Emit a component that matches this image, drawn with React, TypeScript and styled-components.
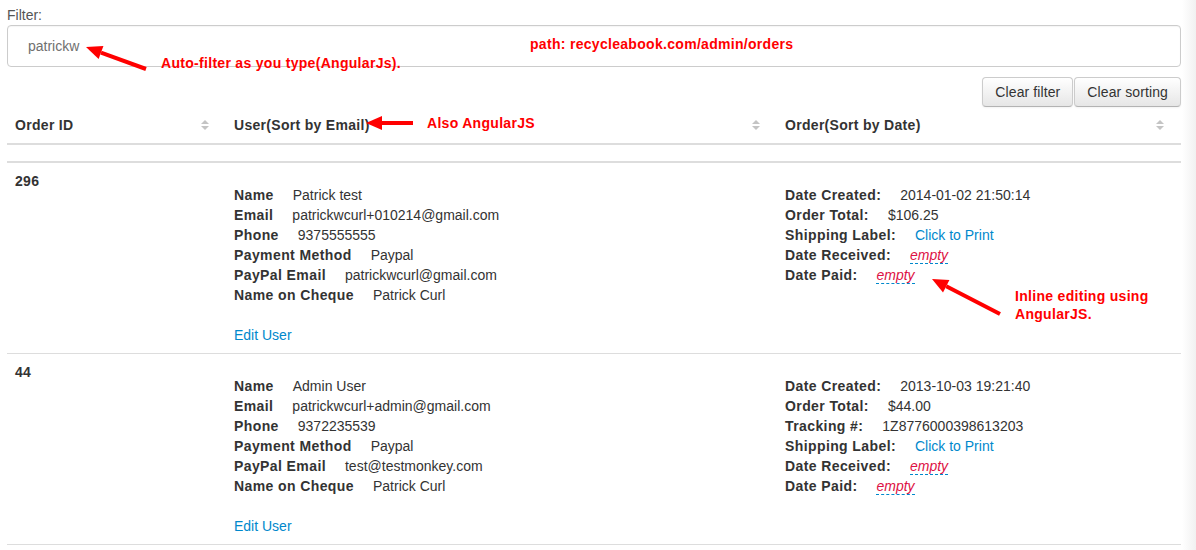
import React from "react";
import styled, { createGlobalStyle } from "styled-components";

const Global = createGlobalStyle`
  html, body {
    margin: 0;
    padding: 0;
    background: linear-gradient(to right, #ffffff 0, #ffffff 1182px, #f1f1f1 1196px);
    font-family: "Liberation Sans", Arial, Helvetica, sans-serif;
    font-size: 14px;
    line-height: 20px;
    color: #333;
  }
`;

const Page = styled.div`
  position: relative;
  width: 1174px;
  padding: 5px 15px 0 7px;
`;

const FilterLabel = styled.label`
  display: block;
  color: #555;
  font-size: 14px;
  line-height: 20px;
`;

const FilterInput = styled.div`
  box-sizing: border-box;
  height: 42px;
  border: 1px solid #ccc;
  border-radius: 4px;
  padding: 10px 20px;
  color: #707070;
  font-size: 14px;
  line-height: 20px;
  box-shadow: inset 0 1px 1px rgba(0, 0, 0, 0.04);
`;

const ButtonBar = styled.div`
  display: flex;
  justify-content: flex-end;
  margin-top: 10px;
`;

const Button = styled.button`
  box-sizing: border-box;
  height: 30px;
  padding: 4px 12px;
  font-family: inherit;
  font-size: 14px;
  line-height: 20px;
  color: #333;
  background: linear-gradient(to bottom, #ffffff, #e6e6e6);
  border: 1px solid #ccc;
  border-bottom-color: #b3b3b3;
  border-radius: 4px;
  box-shadow: inset 0 1px 0 rgba(255, 255, 255, 0.2), 0 1px 2px rgba(0, 0, 0, 0.05);
  margin-left: 1px;
  letter-spacing: 0.1px;
`;

const Table = styled.table`
  width: 1174px;
  border-collapse: collapse;
  border-spacing: 0;
  table-layout: fixed;
`;

const Th = styled.th<{ $w: number }>`
  box-sizing: border-box;
  width: ${(p) => p.$w}px;
  padding: 8px;
  text-align: left;
  font-weight: bold;
  letter-spacing: 0.3px;
  vertical-align: bottom;
  border-bottom: 2px solid #ddd;
`;

const ThInner = styled.div`
  display: flex;
  align-items: center;
  justify-content: space-between;
  padding-right: 9px;
`;

const SortIcon = styled.span`
  display: inline-flex;
  flex-direction: column;
  align-items: center;
  gap: 2px;
  &::before,
  &::after {
    content: "";
    width: 0;
    height: 0;
    border-left: 4px solid transparent;
    border-right: 4px solid transparent;
  }
  &::before {
    border-bottom: 4px solid #c4c4c4;
  }
  &::after {
    border-top: 4px solid #c4c4c4;
  }
`;

const SpacerRow = styled.tr`
  td {
    height: 0;
    padding: 8px;
    border-bottom: 2px solid #ddd;
  }
`;

const Row = styled.tr`
  border-bottom: 1px solid #ddd;
`;

const Td = styled.td`
  box-sizing: border-box;
  padding: 8px;
  vertical-align: top;
`;

const OrderId = styled.div`
  font-weight: bold;
  letter-spacing: 0.3px;
`;

const Details = styled.div`
  margin-top: 14px;
`;

const Line = styled.div`
  display: flex;
  line-height: 20px;
  white-space: nowrap;
`;

const Label = styled.span`
  font-weight: bold;
  letter-spacing: 0.4px;
  margin-right: 19px;
`;

const Link = styled.a`
  color: #0088cc;
  text-decoration: none;
`;

const Empty = styled.span`
  color: #dd1144;
  font-style: italic;
  border-bottom: 1px dashed #0088cc;
  line-height: 18px;
`;

const Blank = styled.div`
  height: 20px;
`;

const Note = styled.div<{ $x: number; $y: number }>`
  position: absolute;
  left: ${(p) => p.$x}px;
  top: ${(p) => p.$y}px;
  color: #ff0000;
  font-weight: bold;
  font-size: 14px;
  line-height: 18px;
  letter-spacing: 0.3px;
  white-space: nowrap;
`;

const Overlay = styled.svg`
  position: absolute;
  left: 0;
  top: 0;
  width: 1196px;
  height: 550px;
  pointer-events: none;
`;

type Field = [string, React.ReactNode];

const Arrow = ({ x1, y1, x2, y2 }: { x1: number; y1: number; x2: number; y2: number }) => {
  const ang = Math.atan2(y2 - y1, x2 - x1);
  const len = 16;
  const wid = 7;
  const bx = x2 - Math.cos(ang) * len;
  const by = y2 - Math.sin(ang) * len;
  const px = -Math.sin(ang) * wid;
  const py = Math.cos(ang) * wid;
  return (
    <g>
      <line x1={x1} y1={y1} x2={bx} y2={by} stroke="#ff0000" strokeWidth={4} />
      <polygon
        points={`${x2},${y2} ${bx + px},${by + py} ${bx - px},${by - py}`}
        fill="#ff0000"
      />
    </g>
  );
};

const orders: { id: string; user: Field[]; order: Field[] }[] = [
  {
    id: "296",
    user: [
      ["Name", "Patrick test"],
      ["Email", "patrickwcurl+010214@gmail.com"],
      ["Phone", "9375555555"],
      ["Payment Method", "Paypal"],
      ["PayPal Email", "patrickwcurl@gmail.com"],
      ["Name on Cheque", "Patrick Curl"],
    ],
    order: [
      ["Date Created:", "2014-01-02 21:50:14"],
      ["Order Total:", "$106.25"],
      ["Shipping Label:", <Link href="#">Click to Print</Link>],
      ["Date Received:", <Empty>empty</Empty>],
      ["Date Paid:", <Empty>empty</Empty>],
    ],
  },
  {
    id: "44",
    user: [
      ["Name", "Admin User"],
      ["Email", "patrickwcurl+admin@gmail.com"],
      ["Phone", "9372235539"],
      ["Payment Method", "Paypal"],
      ["PayPal Email", "test@testmonkey.com"],
      ["Name on Cheque", "Patrick Curl"],
    ],
    order: [
      ["Date Created:", "2013-10-03 19:21:40"],
      ["Order Total:", "$44.00"],
      ["Tracking #:", "1Z8776000398613203"],
      ["Shipping Label:", <Link href="#">Click to Print</Link>],
      ["Date Received:", <Empty>empty</Empty>],
      ["Date Paid:", <Empty>empty</Empty>],
    ],
  },
];

const Fields = ({ items }: { items: Field[] }) => (
  <>
    {items.map(([k, v]) => (
      <Line key={k}>
        <Label>{k}</Label>
        <span>{v}</span>
      </Line>
    ))}
  </>
);

export default function App() {
  return (
    <>
      <Global />
      <Page>
        <FilterLabel>Filter:</FilterLabel>
        <FilterInput>patrickw</FilterInput>
        <ButtonBar>
          <Button>Clear filter</Button>
          <Button>Clear sorting</Button>
        </ButtonBar>
        <Table>
          <thead>
            <tr>
              <Th $w={219}>
                <ThInner>
                  Order ID <SortIcon />
                </ThInner>
              </Th>
              <Th $w={551}>
                <ThInner>
                  User(Sort by Email) <SortIcon />
                </ThInner>
              </Th>
              <Th $w={404}>
                <ThInner>
                  Order(Sort by Date) <SortIcon />
                </ThInner>
              </Th>
            </tr>
          </thead>
          <tbody>
            <SpacerRow>
              <td colSpan={3} />
            </SpacerRow>
            {orders.map((o) => (
              <Row key={o.id}>
                <Td>
                  <OrderId>{o.id}</OrderId>
                </Td>
                <Td>
                  <Details>
                    <Fields items={o.user} />
                    <Blank />
                    <Link href="#">Edit User</Link>
                  </Details>
                </Td>
                <Td>
                  <Details>
                    <Fields items={o.order} />
                  </Details>
                </Td>
              </Row>
            ))}
          </tbody>
        </Table>
      </Page>
      <Overlay>
        <Arrow x1={146} y1={69} x2={86} y2={47} />
        <Arrow x1={413} y1={123} x2={366} y2={123} />
        <Arrow x1={1000} y1={314} x2={932} y2={279} />
      </Overlay>
      <Note $x={161} $y={54}>Auto-filter as you type(AngularJs).</Note>
      <Note $x={530} $y={35}>path: recycleabook.com/admin/orders</Note>
      <Note $x={427} $y={114}>Also AngularJS</Note>
      <Note $x={1015} $y={287}>
        Inline editing using
        <br />
        AngularJS.
      </Note>
    </>
  );
}
